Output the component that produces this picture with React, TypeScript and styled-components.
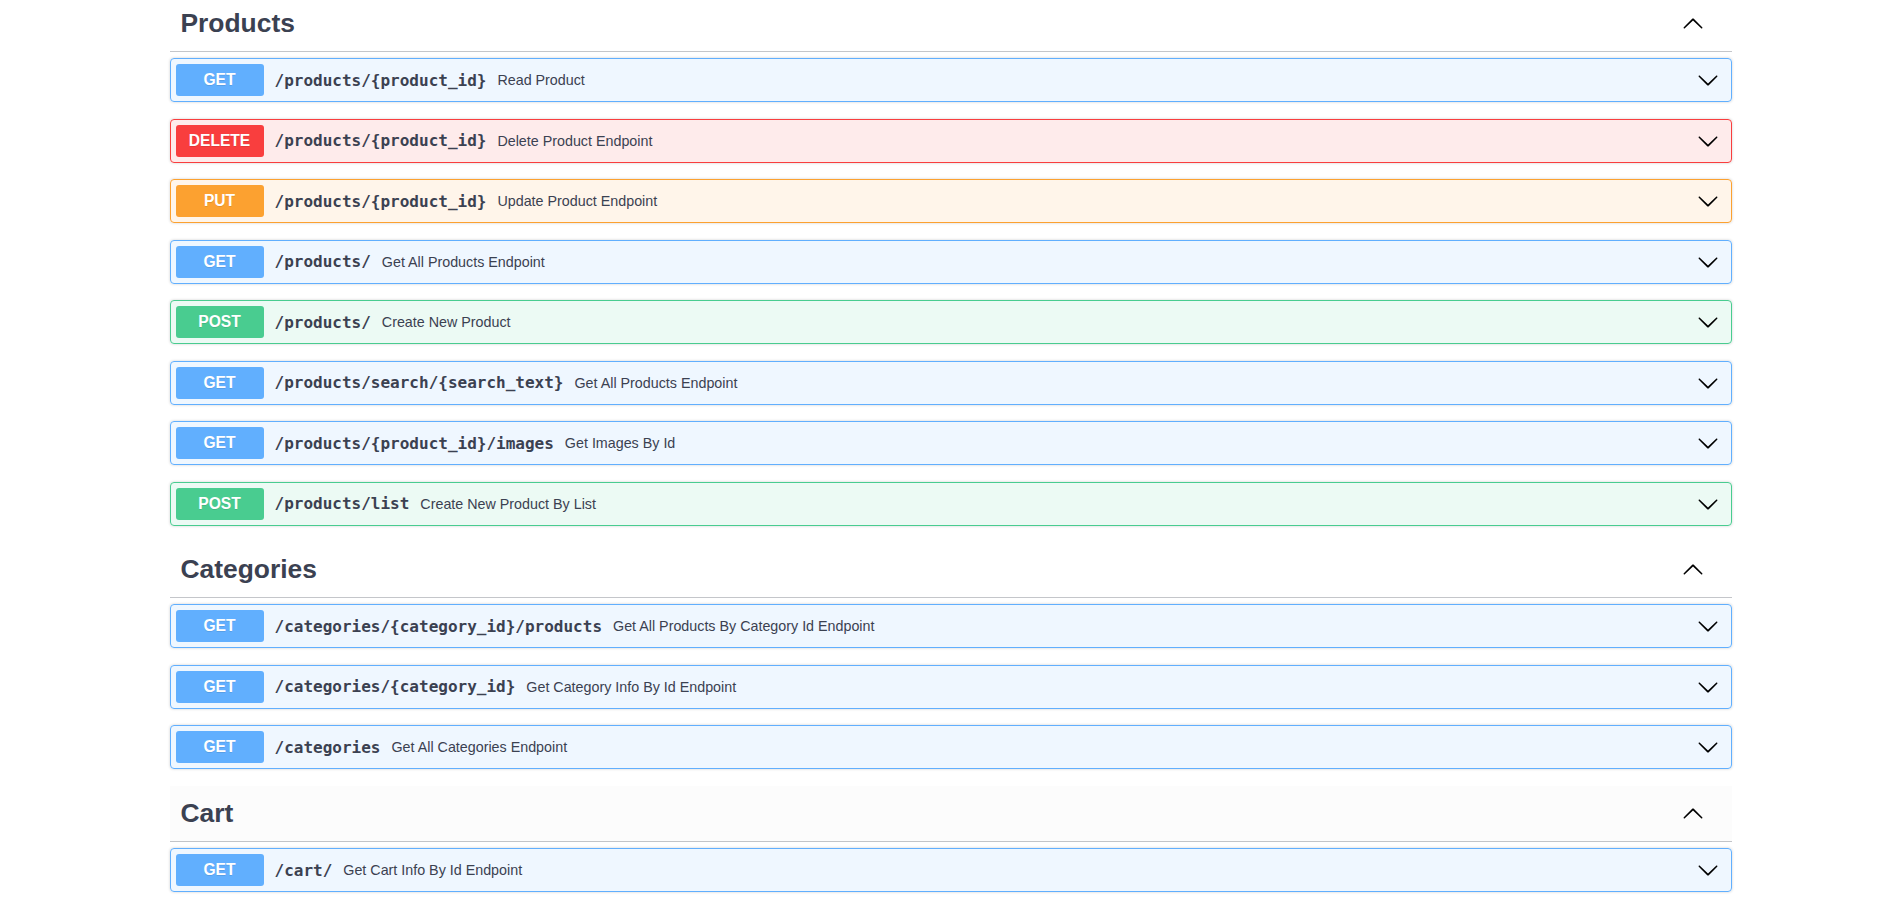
import React from "react";
import styled, { createGlobalStyle } from "styled-components";

type Method = "GET" | "POST" | "PUT" | "DELETE";

const palette: Record<Method, { main: string; soft: string }> = {
  GET: { main: "#61affe", soft: "rgba(97,175,254,.1)" },
  POST: { main: "#49cc90", soft: "rgba(73,204,144,.1)" },
  PUT: { main: "#fca130", soft: "rgba(252,161,48,.1)" },
  DELETE: { main: "#f93e3e", soft: "rgba(249,62,62,.1)" },
};

const GlobalStyle = createGlobalStyle`
  html, body {
    margin: 0;
    padding: 0;
    background: #fff;
    overflow: hidden;
  }
  body {
    font-family: "Liberation Sans", Arial, sans-serif;
    color: #3b4151;
  }
`;

const Wrapper = styled.div`
  box-sizing: border-box;
  max-width: 1564px;
  padding-left: 2px;
  margin: -4px auto 0;
`;

const Section = styled.section`
  display: flex;
  flex-direction: column;
`;

const TagHeading = styled.div<{ $hover?: boolean }>`
  display: flex;
  align-items: center;
  padding: 10px 28px 10px 11px;
  border-bottom: 1px solid rgba(59, 65, 81, 0.3);
  margin-bottom: 6px;
  background: ${(p) => (p.$hover ? "rgba(0,0,0,.012)" : "transparent")};
`;

const TagTitle = styled.h3`
  flex: 1;
  margin: 0;
  font-family: "Liberation Sans", Arial, sans-serif;
  font-size: 26.4px;
  line-height: 35px;
  font-weight: 700;
  color: #3b4151;
`;

const OpBlock = styled.div<{ $method: Method }>`
  display: flex;
  align-items: center;
  padding: 5px 12px 5px 5px;
  border: 1px solid ${(p) => palette[p.$method].main};
  background: ${(p) => palette[p.$method].soft};
  border-radius: 4px;
  box-shadow: 0 0 3px rgba(0, 0, 0, 0.19);
  margin-bottom: 16.55px;
`;

const MethodBadge = styled.span<{ $method: Method }>`
  flex: none;
  width: 88px;
  height: 32px;
  display: flex;
  align-items: center;
  justify-content: center;
  border-radius: 3px;
  background: ${(p) => palette[p.$method].main};
  color: #fff;
  font-family: "Liberation Sans", Arial, sans-serif;
  font-size: 15.6px;
  font-weight: 700;
  text-shadow: 0 1px 0 rgba(0, 0, 0, 0.1);
`;

const PathText = styled.span`
  padding: 0 11px;
  font-family: "DejaVu Sans Mono", "Liberation Mono", monospace;
  font-size: 16px;
  font-weight: 700;
  color: #3b4151;
  white-space: nowrap;
`;

const Description = styled.span`
  flex: 1;
  font-family: "Liberation Sans", Arial, sans-serif;
  font-size: 14.3px;
  color: #3b4151;
`;

const ArrowSvg = styled.svg<{ $up?: boolean }>`
  flex: none;
  width: 22px;
  height: 22px;
  fill: #000;
  transform: ${(p) => (p.$up ? "rotate(180deg)" : "none")};
`;

const Arrow = ({ up }: { up?: boolean }) => (
  <ArrowSvg $up={up} viewBox="0 0 20 20" aria-hidden="true">
    <path d="M17.418 6.109c.272-.268.709-.268.979 0s.271.701 0 .969l-7.908 7.83c-.27.268-.707.268-.979 0l-7.908-7.83c-.27-.268-.27-.701 0-.969.271-.268.709-.268.979 0L10 13.25l7.418-7.141z" />
  </ArrowSvg>
);

type Op = { method: Method; path: string; summary: string };

const sections: { tag: string; hover?: boolean; ops: Op[] }[] = [
  {
    tag: "Products",
    ops: [
      { method: "GET", path: "/products/{product_id}", summary: "Read Product" },
      { method: "DELETE", path: "/products/{product_id}", summary: "Delete Product Endpoint" },
      { method: "PUT", path: "/products/{product_id}", summary: "Update Product Endpoint" },
      { method: "GET", path: "/products/", summary: "Get All Products Endpoint" },
      { method: "POST", path: "/products/", summary: "Create New Product" },
      { method: "GET", path: "/products/search/{search_text}", summary: "Get All Products Endpoint" },
      { method: "GET", path: "/products/{product_id}/images", summary: "Get Images By Id" },
      { method: "POST", path: "/products/list", summary: "Create New Product By List" },
    ],
  },
  {
    tag: "Categories",
    ops: [
      { method: "GET", path: "/categories/{category_id}/products", summary: "Get All Products By Category Id Endpoint" },
      { method: "GET", path: "/categories/{category_id}", summary: "Get Category Info By Id Endpoint" },
      { method: "GET", path: "/categories", summary: "Get All Categories Endpoint" },
    ],
  },
  {
    tag: "Cart",
    hover: true,
    ops: [{ method: "GET", path: "/cart/", summary: "Get Cart Info By Id Endpoint" }],
  },
];

export default function App() {
  return (
    <>
      <GlobalStyle />
      <Wrapper>
        {sections.map((s) => (
          <Section key={s.tag}>
            <TagHeading $hover={s.hover}>
              <TagTitle>{s.tag}</TagTitle>
              <Arrow up />
            </TagHeading>
            {s.ops.map((op, i) => (
              <OpBlock key={i} $method={op.method}>
                <MethodBadge $method={op.method}>{op.method}</MethodBadge>
                <PathText>{op.path}</PathText>
                <Description>{op.summary}</Description>
                <Arrow />
              </OpBlock>
            ))}
          </Section>
        ))}
      </Wrapper>
    </>
  );
}
